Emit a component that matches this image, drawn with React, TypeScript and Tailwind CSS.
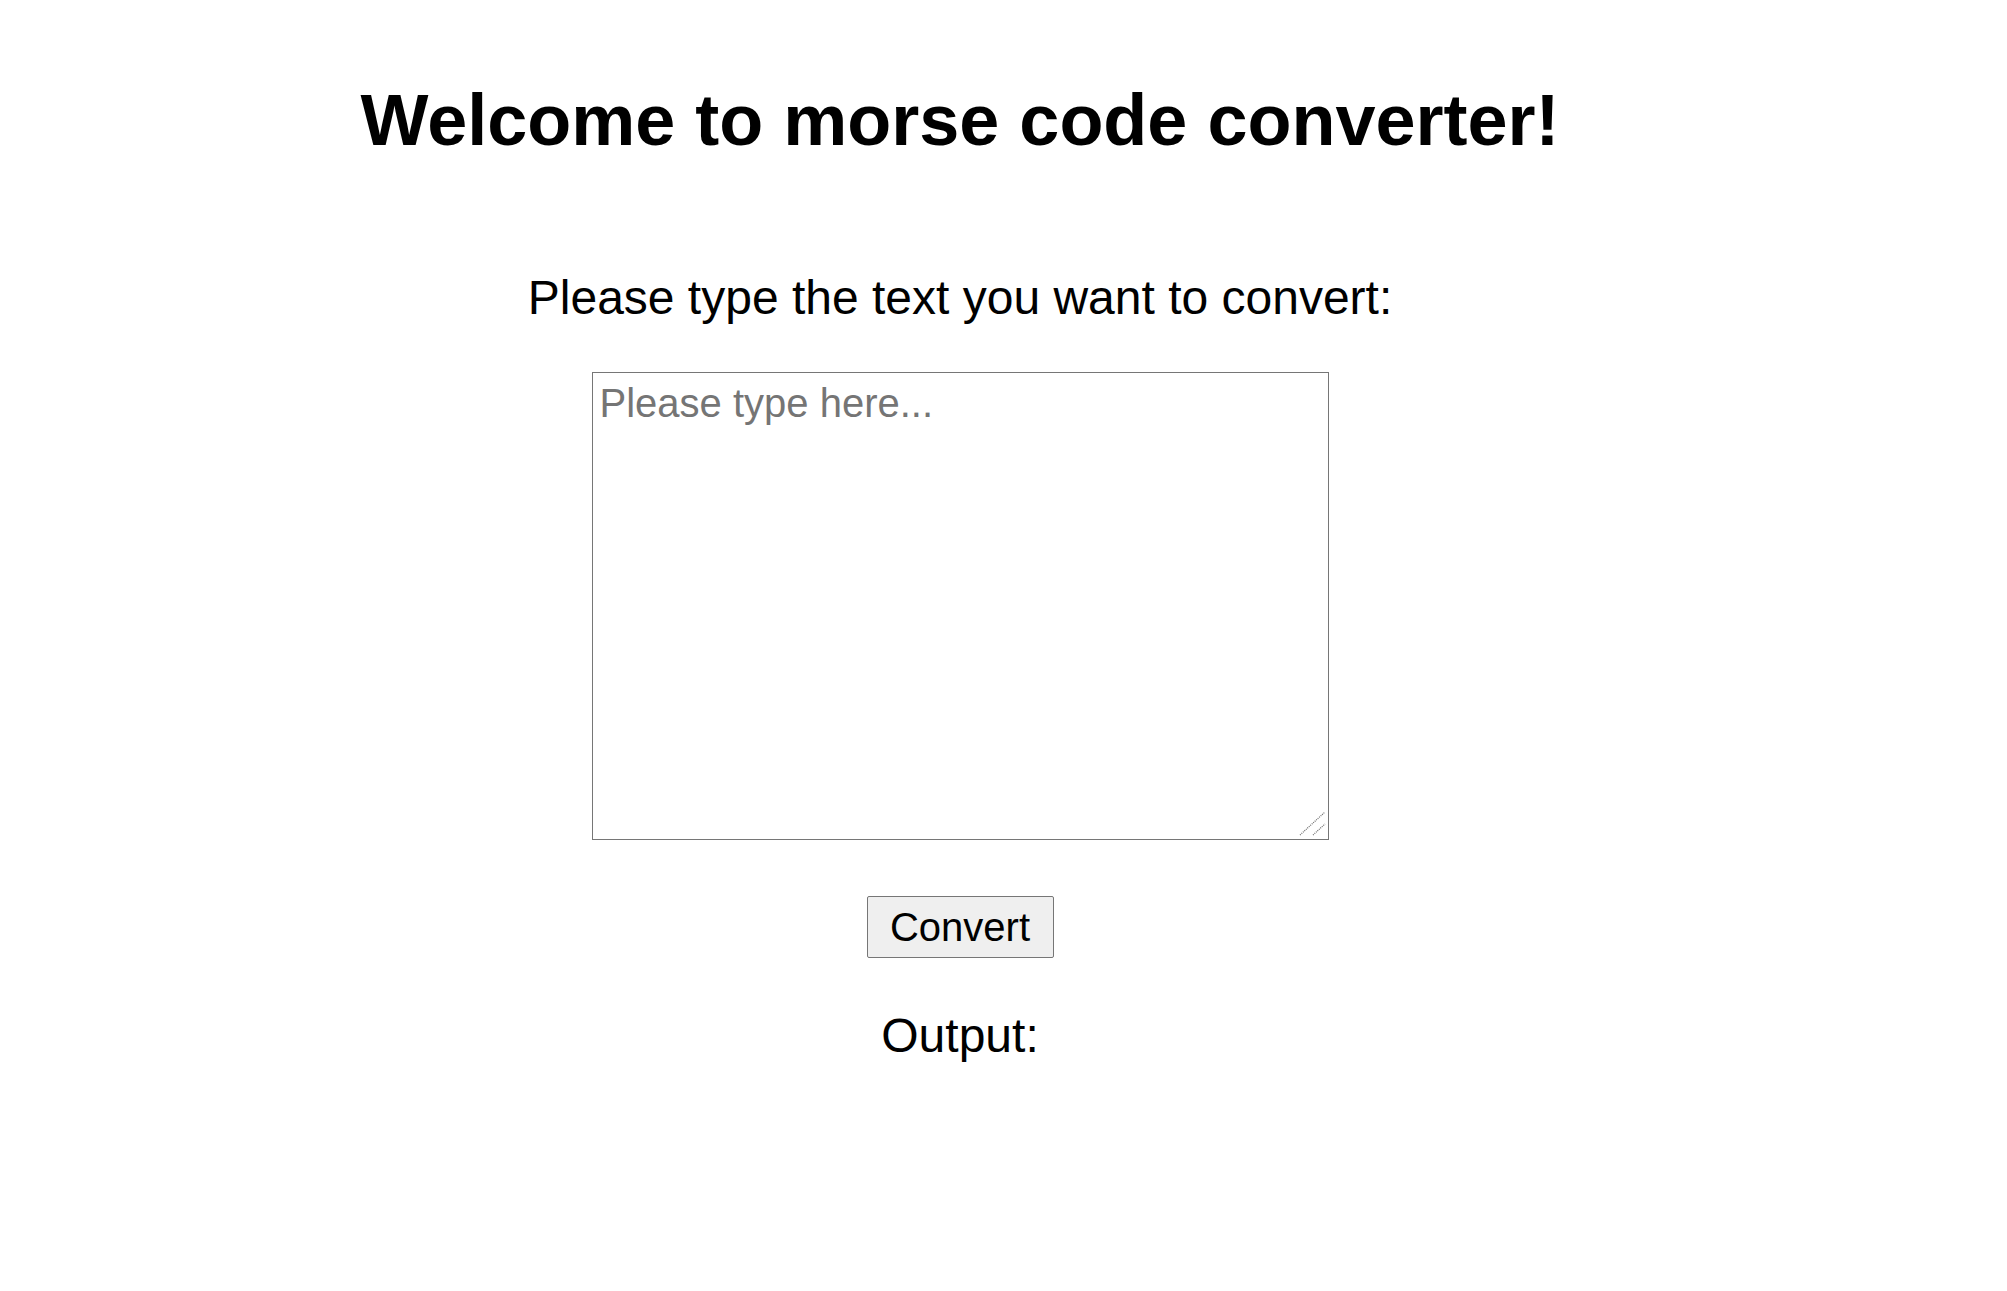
import { useState } from 'react';

const App = () => {
  const [text, setText] = useState('');
  const [output, setOutput] = useState('');

  return (
    <div className="min-h-screen bg-white text-black font-['Liberation_Sans',Arial,sans-serif]">
      <div className="w-[1920px] flex flex-col items-center text-center">
        {/* Title */}
        <h1 className="mt-[79px] text-[72px] font-bold leading-[normal]">Welcome to morse code converter!</h1>

        <p className="mt-[109px] text-[48px] leading-[normal]">Please type the text you want to convert:</p>

        <div className="relative mt-[47px]">
          <textarea
            className="block w-[737px] h-[468px] resize-none border border-[#767676] bg-white px-[7px] pt-[8px] pb-[6px] text-[40px] leading-[normal] text-black placeholder:text-[#757575] font-['Liberation_Sans',Arial,sans-serif]"
            placeholder="Please type here..."
            value={text}
            onChange={(e) => setText(e.target.value)}
          />
          {/* resize grip */}
          <svg className="absolute right-0 bottom-0 pointer-events-none" width="32" height="32" viewBox="0 0 32 32">
            <line x1="3" y1="27" x2="28" y2="4" stroke="#6b6b6b" strokeWidth="1.2" strokeDasharray="1 1" />
            <line x1="16" y1="27" x2="28" y2="16" stroke="#6b6b6b" strokeWidth="1.2" strokeDasharray="1 1" />
          </svg>
        </div>

        <button
          className="mt-[56px] h-[62px] w-[187px] rounded-[2px] border border-[#767676] bg-[#efefef] text-[40px] leading-[normal] text-black"
          onClick={() => setOutput(text)}
        >
          Convert
        </button>

        <p className="mt-[50px] text-[48px] leading-[normal]">Output:</p>
        {output && <p className="text-[48px] leading-[normal]">{output}</p>}
      </div>
    </div>
  );
};

export default App;
